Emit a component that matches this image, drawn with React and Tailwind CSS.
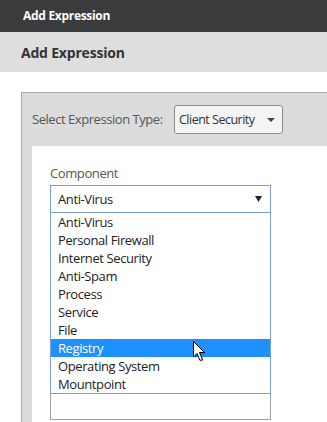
import React from "react";

const items = [
  "Anti-Virus",
  "Personal Firewall",
  "Internet Security",
  "Anti-Spam",
  "Process",
  "Service",
  "File",
  "Registry",
  "Operating System",
  "Mountpoint",
];

export default function App() {
  return (
    <div
      className="relative w-[327px] h-[422px] overflow-hidden bg-white"
      style={{ fontFamily: '"Open Sans", "Noto Sans", sans-serif' }}
    >
      <div className="h-8 bg-[#3b3c3e] flex items-center pl-[23px] text-white text-[12px] font-bold tracking-[-0.3px]">
        Add Expression
      </div>
      <div className="h-10 bg-[#dedede] flex items-center pl-[21px] pt-[1px] text-[#333] text-[14px] font-bold tracking-[-0.2px]">
        Add Expression
      </div>
      <div className="pt-5 pl-[21px]">
        <div className="w-[400px] h-[400px] bg-[#dcdcdc] border-l border-t border-[#a9a9a9] pl-[10px] pt-3">
          <div className="flex items-center h-[29px]">
            <span className="text-[13px] text-[#555] w-[142px] tracking-[-0.45px] pt-[1px]">Select Expression Type:</span>
            <div className="w-[109px] h-[29px] border border-[#8a8a8a] rounded-[3px] bg-[#f4f4f4] flex items-center pl-[4px] pr-[7px] justify-between">
              <span className="text-[12.5px] text-[#333] tracking-[-0.5px] pt-[1px]">Client Security</span>
              <svg width="8" height="4" viewBox="0 0 8 4">
                <path d="M0 0 L8 0 L4 4 Z" fill="#444" />
              </svg>
            </div>
          </div>
          <div className="mt-3 bg-white h-[400px] pl-[18px] pt-[18px]">
            <div className="text-[13px] text-[#555] leading-[17px] h-[21px] tracking-[-0.4px] pt-[1px]">Component</div>
            <div className="w-[221px] h-[28px] border border-[#7b9fd8] flex items-center justify-between pl-[7px] pr-[8px]">
              <span className="text-[13px] text-[#222] tracking-[-0.4px] pt-[1px]">Anti-Virus</span>
              <svg width="7" height="6" viewBox="0 0 7 6">
                <path d="M0 0 L7 0 L3.5 6 Z" fill="#222" />
              </svg>
            </div>
            <div className="w-[221px] border-x border-b border-[#7b9fd8]">
              {items.map((it) => (
                <div
                  key={it}
                  className={
                    "h-[18px] flex items-center pl-[7px] pt-[1px] text-[13px] tracking-[-0.4px] " +
                    (it === "Registry" ? "bg-[#1e90ff] text-white" : "text-[#222]")
                  }
                >
                  {it}
                </div>
              ))}
            </div>
            <div className="w-[221px] h-[26px] border-x border-b border-[#a0a0a0]"></div>
          </div>
        </div>
      </div>
      <svg
        className="absolute left-[192px] top-[340px]"
        width="16"
        height="23"
        viewBox="0 0 16 23"
      >
        <path
          d="M1.5 1.5 L1.5 17 L5 13.5 L8 20.5 L10.5 19.5 L7.5 12.5 L12.5 12.5 Z"
          fill="#000"
          opacity="0.25"
          transform="translate(1.5 1.5)"
        />
        <path
          d="M1.5 1.5 L1.5 17 L5 13.5 L8 20.5 L10.5 19.5 L7.5 12.5 L12.5 12.5 Z"
          fill="#fff"
          stroke="#000"
          strokeWidth="1"
          strokeLinejoin="miter"
        />
      </svg>
    </div>
  );
}
